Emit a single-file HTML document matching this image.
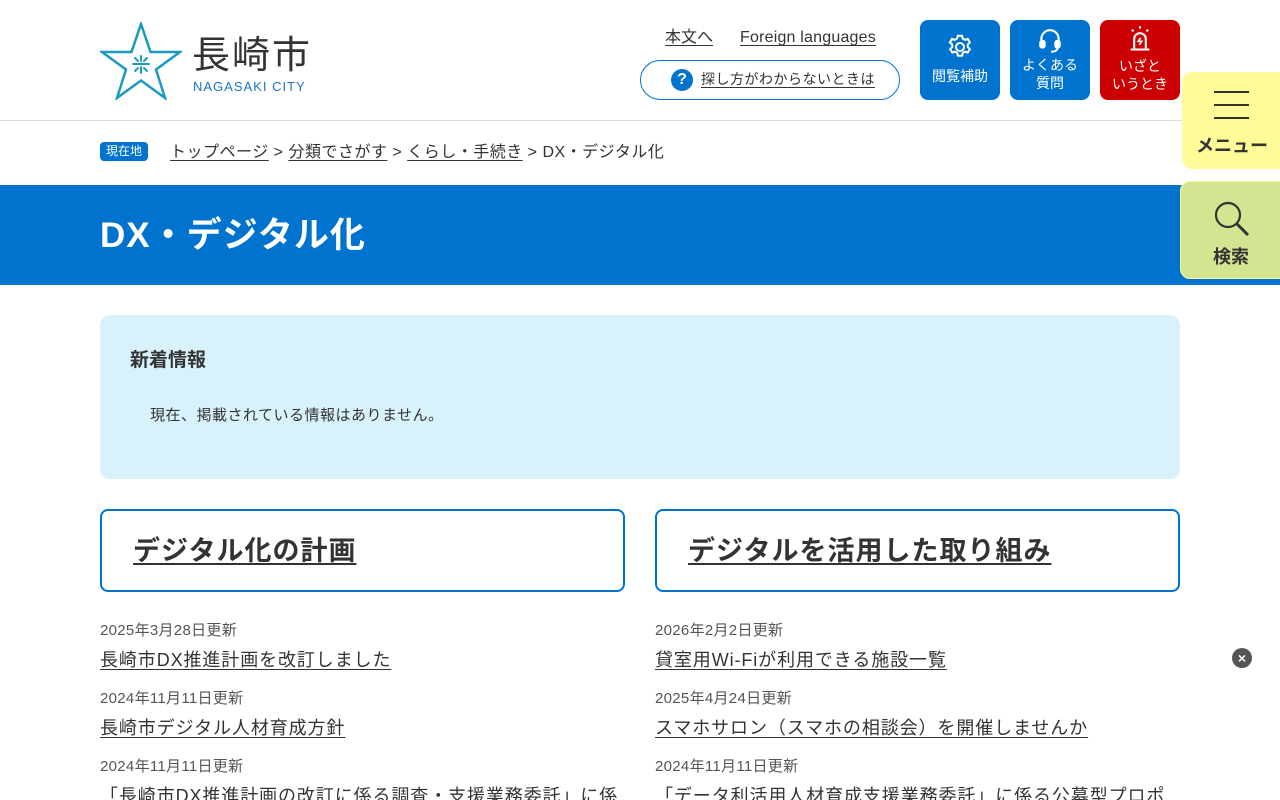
<!DOCTYPE html>
<html lang="ja"><head><meta charset="utf-8">
<style>
*{margin:0;padding:0;box-sizing:border-box}
html,body{width:1280px;height:800px;overflow:hidden}
body{background:#fff;color:#333;font-family:"Liberation Sans","Noto Sans CJK JP",sans-serif;position:relative}
a{color:#333;text-decoration:underline;text-underline-offset:3px}
.abs{position:absolute}
.hdr{position:absolute;left:0;top:0;width:1280px;height:121px;border-bottom:1px solid #ddd}
.btn{position:absolute;top:20px;width:80px;height:80px;border-radius:8px;color:#fff;text-align:center;font-size:14px;line-height:18px}
.crumb{position:absolute;top:142px;left:100px;font-size:16px;line-height:22px;white-space:nowrap;letter-spacing:.5px}
.band{position:absolute;left:0;top:185px;width:1280px;height:100px;background:#0073cf}
.band h1{position:absolute;left:100px;top:29px;color:#fff;font-size:35px;line-height:44px;font-weight:bold;letter-spacing:1px}
.news{position:absolute;left:100px;top:315px;width:1080px;height:164px;background:#d8f2fc;border-radius:10px}
.card{position:absolute;top:509px;width:525px;height:83px;border:2px solid #0073cf;border-radius:8px}
.card a{position:absolute;left:31px;top:21px;font-size:27px;line-height:38px;font-weight:bold;letter-spacing:1px}
.list{position:absolute;top:619px;width:540px;white-space:nowrap}
.d{font-size:15px;color:#555;line-height:24px;margin-bottom:4px;letter-spacing:.3px}
.l{font-size:18px;line-height:26px;margin-bottom:14px;letter-spacing:.9px}
.tab{z-index:5}
</style></head><body>
<div class="hdr"></div>
<svg class="abs" style="left:100px;top:22px" width="82" height="78" viewBox="0 0 82 78">
<polygon points="41,2 50.5,30 80,30 56,47.5 65,76 41,58.5 17,76 26,47.5 2,30 31.5,30" fill="none" stroke="#1a9ac0" stroke-width="2.5"/>
<g stroke="#1a9ac0" stroke-width="2" stroke-linecap="round"><path d="M35 36l3 3M47 36l-3 3M41 34v5M33 42h16M35 49l3-3M47 49l-3-3M41 45v6"/></g>
</svg>
<div class="abs" style="left:192px;top:32px;font-size:38px;line-height:48px;color:#333;letter-spacing:2px">長崎市</div>
<div class="abs" style="left:193px;top:79px;font-size:13px;line-height:16px;color:#1a73c8;letter-spacing:1px">NAGASAKI CITY</div>
<a class="abs" style="left:665px;top:27px;font-size:16px;line-height:22px">本文へ</a>
<a class="abs" style="left:740px;top:27px;font-size:16px;line-height:22px;letter-spacing:.2px">Foreign languages</a>
<div class="abs" style="left:640px;top:60px;width:260px;height:40px;border:1px solid #0073cf;border-radius:20px"></div>
<div class="abs" style="left:671px;top:69px;width:22px;height:22px;border-radius:50%;background:#0073cf;color:#fff;font-weight:bold;font-size:16px;line-height:22px;text-align:center">?</div>
<a class="abs" style="left:701px;top:69px;font-size:14px;line-height:20px;letter-spacing:.5px">探し方がわからないときは</a>
<div class="btn" style="left:920px;background:#0073cf">
<svg width="30" height="30" viewBox="0 0 24 24" style="margin-top:12px" fill="none" stroke="#fff" stroke-width="1.6"><circle cx="12" cy="12" r="3.2"/><path d="M10.3 3h3.4l.5 2.3 1.8 1 2.2-.8 1.7 2.9-1.7 1.6v2l1.7 1.6-1.7 2.9-2.2-.8-1.8 1-.5 2.3h-3.4l-.5-2.3-1.8-1-2.2.8-1.7-2.9 1.7-1.6v-2L3.9 8.4l1.7-2.9 2.2.8 1.8-1z"/></svg>
<div style="margin-top:1px">閲覧補助</div></div>
<div class="btn" style="left:1010px;background:#0073cf">
<svg width="26" height="28" viewBox="0 0 24 26" style="margin-top:7px" fill="none" stroke="#fff" stroke-width="2"><path d="M4 14v-3a8 8 0 0116 0v3"/><rect x="3" y="13" width="4" height="6" rx="1.5" fill="#fff"/><rect x="17" y="13" width="4" height="6" rx="1.5" fill="#fff"/><path d="M19 19c0 3-3 4-6 4"/></svg>
<div style="margin-top:-3px">よくある<br>質問</div></div>
<div class="btn" style="left:1100px;background:#cc0000">
<svg width="28" height="28" viewBox="0 0 24 24" style="margin-top:5px" fill="none" stroke="#fff" stroke-width="1.8"><path d="M7 20v-8a5 5 0 0110 0v8M4 21h16M12 1v2M5 4l1.5 1.5M19 4l-1.5 1.5"/><path d="M12.5 11l-2 3h3l-2 3" stroke-width="1.4"/></svg>
<div>いざと<br>いうとき</div></div>
<div class="crumb"><span style="display:inline-block;background:#0073cf;color:#fff;font-size:12px;line-height:19px;padding:0 6px;border-radius:4px;vertical-align:2px;margin-right:22px;letter-spacing:0">現在地</span><a>トップページ</a> &gt; <a>分類でさがす</a> &gt; <a>くらし・手続き</a> &gt; DX・デジタル化</div>
<div class="band"><h1>DX・デジタル化</h1></div>
<div class="abs tab" style="left:1182px;top:72px;width:100px;height:97px;background:#fffb99;border-radius:10px 0 0 10px">
<div style="position:absolute;left:32px;top:19px;width:35px;height:2px;background:#333;box-shadow:0 13px 0 #333,0 26px 0 #333"></div>
<div style="position:absolute;left:14px;top:62px;font-size:18px;font-weight:bold;line-height:24px">メニュー</div></div>
<div class="abs tab" style="left:1180px;top:181px;width:102px;height:98px;background:#d4e591;border:1px solid #fffb99;border-radius:10px 0 0 10px">
<svg style="position:absolute;left:32px;top:18px" width="38" height="38" viewBox="0 0 38 38" fill="none" stroke="#333" stroke-width="2.2"><circle cx="15" cy="15" r="12"/><path d="M24 24l11 11" stroke-width="3"/></svg>
<div style="position:absolute;left:32px;top:63px;font-size:18px;font-weight:bold;line-height:24px">検索</div></div>
<div class="news">
<div style="position:absolute;left:30px;top:33px;font-size:19px;font-weight:bold;line-height:26px">新着情報</div>
<div style="position:absolute;left:50px;top:91px;font-size:15px;line-height:20px;letter-spacing:.5px">現在、掲載されている情報はありません。</div></div>
<div class="card" style="left:100px"><a>デジタル化の計画</a></div>
<div class="card" style="left:655px"><a>デジタルを活用した取り組み</a></div>
<div class="list" style="left:100px">
<div class="d">2025年3月28日更新</div><div class="l"><a>長崎市DX推進計画を改訂しました</a></div>
<div class="d">2024年11月11日更新</div><div class="l"><a>長崎市デジタル人材育成方針</a></div>
<div class="d">2024年11月11日更新</div><div class="l"><a>「長崎市DX推進計画の改訂に係る調査・支援業務委託」に係</a></div></div>
<div class="list" style="left:655px">
<div class="d">2026年2月2日更新</div><div class="l"><a>貸室用Wi-Fiが利用できる施設一覧</a></div>
<div class="d">2025年4月24日更新</div><div class="l"><a>スマホサロン（スマホの相談会）を開催しませんか</a></div>
<div class="d">2024年11月11日更新</div><div class="l"><a>「データ利活用人材育成支援業務委託」に係る公募型プロポ</a></div></div>
<div class="abs" style="left:1232px;top:648px;width:20px;height:20px;border-radius:50%;background:#555;color:#fff;font-size:14px;font-weight:bold;line-height:20px;text-align:center">×</div>
</body></html>
